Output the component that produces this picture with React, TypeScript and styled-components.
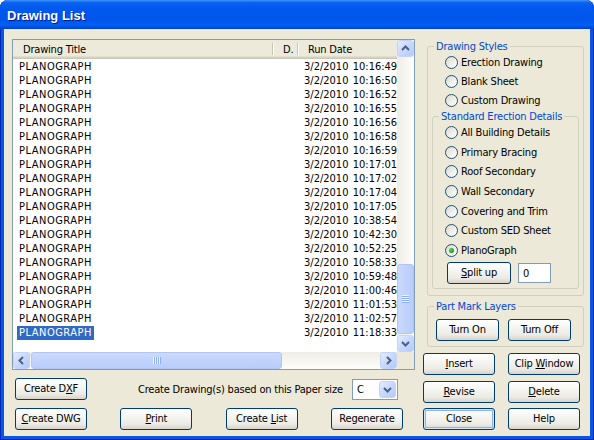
import React from 'react'
import styled, { createGlobalStyle } from 'styled-components'

const GlobalStyle = createGlobalStyle`
  html, body {
    margin: 0;
    padding: 0;
    background: #ffffff;
  }
  body {
    font-family: 'DejaVu Sans Condensed', 'DejaVu Sans', sans-serif;
    font-stretch: condensed;
    font-size: 11px;
    letter-spacing: -0.2px;
    color: #000;
  }
`

const Window = styled.div`
  width: 594px;
  height: 440px;
  display: flex;
  flex-direction: column;
  border-radius: 8px 8px 0 0;
  overflow: hidden;
  background: #0a56e2;
  box-shadow: inset 1px 0 #0028b8, inset -1px 0 #0028b8, inset 0 -1px #0020a8;
`

const TitleBar = styled.div`
  flex: none;
  height: 29px;
  display: flex;
  align-items: center;
  padding: 1px 7px 0;
  box-sizing: border-box;
  background: linear-gradient(
    to bottom,
    #3d95ff 0%,
    #0a62f0 9%,
    #0058ee 30%,
    #0056ea 70%,
    #0060f6 86%,
    #004ee0 94%,
    #0040c8 100%
  );
  color: #fff;
  font: bold 13px 'Liberation Sans', Arial, sans-serif;
  font-stretch: normal;
  letter-spacing: 0;
  text-shadow: 1px 1px #0a1883;
`

const Client = styled.div`
  flex: 1;
  display: flex;
  margin: 0 4px 4px;
  padding: 10px 0 0 8px;
  background: #ece9d8;
`

const LeftCol = styled.div`
  width: 403px;
  display: flex;
  flex-direction: column;
`

const RightCol = styled.div`
  width: 165px;
  margin-left: 8px;
  display: flex;
  flex-direction: column;
`

/* ---------- list view ---------- */

const ListView = styled.div`
  width: 403px;
  height: 331px;
  box-sizing: border-box;
  border: 1px solid #7f9db9;
  background: #fff;
  display: grid;
  grid-template-columns: 1fr 17px;
  grid-template-rows: 1fr 17px;
`

const ListPane = styled.div`
  overflow: hidden;
  display: flex;
  flex-direction: column;
`

const Header = styled.div`
  flex: none;
  height: 19px;
  display: flex;
  padding: 3px 0 4px;
  box-sizing: border-box;
  background: #ebeadb;
  box-shadow: inset 0 -1px #cbc7b8, inset 0 -2px #d6d2c2, inset 0 -3px #e2decd;
`

const HeaderCell = styled.div<{ $w?: number }>`
  ${p => (p.$w ? `width: ${p.$w}px; flex: none;` : 'flex: 1;')}
  box-sizing: border-box;
  padding-left: 10px;
  display: flex;
  align-items: center;
  white-space: nowrap;
  overflow: hidden;
  border-right: ${p => (p.$w ? '1px solid #c7c5b2' : 'none')};
  box-shadow: ${p => (p.$w ? '1px 0 #fff' : 'none')};
`

const Row = styled.div`
  height: 14px;
  display: flex;
  align-items: center;
  white-space: pre;
`

const TitleCell = styled.div`
  width: 260px;
  flex: none;
  padding-left: 4px;
  box-sizing: border-box;
`

const TitleText = styled.span<{ $selected?: boolean }>`
  padding: 0 2px 1px;
  letter-spacing: 0.5px;
  background: ${p => (p.$selected ? '#316ac5' : 'transparent')};
  color: ${p => (p.$selected ? '#fff' : '#000')};
`

const DCell = styled.div`
  width: 25px;
  flex: none;
`

const DateCell = styled.div`
  flex: none;
  padding-left: 6px;
  letter-spacing: 0;
  word-spacing: -1px;
`

/* ---------- scrollbars ---------- */

const VScroll = styled.div`
  display: flex;
  flex-direction: column;
  background: linear-gradient(to right, #eeede5, #fefefb);
`

const HScroll = styled.div`
  display: flex;
  background: linear-gradient(to bottom, #eeede5, #fefefb);
`

const SizeBox = styled.div`
  background: #ece9d8;
`

const ArrowButton = styled.div`
  width: 17px;
  height: 17px;
  flex: none;
  box-sizing: border-box;
  border: 1px solid #c3d3fd;
  border-radius: 3px;
  background: linear-gradient(135deg, #e4ecfe 0%, #c8d8fc 50%, #b3c9f8 100%);
  display: flex;
  align-items: center;
  justify-content: center;
`

const Track = styled.div<{ $vertical?: boolean }>`
  flex: 1;
  display: flex;
  flex-direction: ${p => (p.$vertical ? 'column' : 'row')};
`

const Thumb = styled.div<{ $vertical?: boolean; $offset: number; $size: number }>`
  box-sizing: border-box;
  border: 1px solid #b3c6f3;
  border-radius: 3px;
  display: flex;
  align-items: center;
  justify-content: center;
  ${p =>
    p.$vertical
      ? `margin-top: ${p.$offset}px; height: ${p.$size}px;
         background: linear-gradient(to right, #cad9fd, #b9cdfa);`
      : `margin-left: ${p.$offset}px; width: ${p.$size}px;
         background: linear-gradient(to bottom, #cad9fd, #b9cdfa);`}
`

const Grip = styled.span<{ $vertical?: boolean }>`
  ${p =>
    p.$vertical
      ? `width: 7px; height: 8px;
         background: repeating-linear-gradient(to bottom, #eef4fe 0 1px, #8cb0f8 1px 2px);`
      : `width: 8px; height: 7px;
         background: repeating-linear-gradient(to right, #eef4fe 0 1px, #8cb0f8 1px 2px);`}
`

const Chevron = ({ dir }: { dir: 'up' | 'down' | 'left' | 'right' }) => {
  const pts = {
    up: '1,6 4.5,2.5 8,6',
    down: '1,3 4.5,6.5 8,3',
    left: '6,1 2.5,4.5 6,8',
    right: '3,1 6.5,4.5 3,8',
  }[dir]
  return (
    <svg width="9" height="9" viewBox="0 0 9 9">
      <polyline points={pts} fill="none" stroke="#4d6185" strokeWidth="2" />
    </svg>
  )
}

/* ---------- controls ---------- */

const Button = styled.div<{ $w?: number; $default?: boolean }>`
  width: ${p => p.$w ?? 72}px;
  height: 22px;
  flex: none;
  box-sizing: border-box;
  border: 1px solid #003c74;
  border-radius: 3px;
  background: linear-gradient(to bottom, #ffffff 0%, #f6f6f2 35%, #ecebe5 75%, #d8d3c8 100%);
  text-align: center;
  line-height: 20px;
  white-space: pre;
  box-shadow: ${p =>
    p.$default ? 'inset 0 0 0 1px #cee7ff, inset 0 0 0 2px #8db2ec' : 'none'};
`

const U = styled.span`
  text-decoration: underline;
`

const BottomArea = styled.div`
  display: flex;
  flex-direction: column;
  gap: 8px;
  margin-top: 8px;
  padding-left: 3px;
  width: 388px;
`

const BottomRow = styled.div<{ $spread?: boolean }>`
  display: flex;
  align-items: center;
  justify-content: ${p => (p.$spread ? 'space-between' : 'flex-start')};
`

const PaperLabel = styled.span`
  margin-left: 51px;
  white-space: nowrap;
`

const Combo = styled.div`
  margin-left: auto;
  margin-right: 5px;
  width: 46px;
  height: 21px;
  box-sizing: border-box;
  border: 1px solid #7f9db9;
  background: #fff;
  display: flex;
  align-items: center;
  padding: 1px;
`

const ComboText = styled.span`
  flex: 1;
  padding-left: 3px;
`

const ComboButton = styled(ArrowButton)`
  height: 17px;
`

const GroupBox = styled.fieldset<{ $inset?: number }>`
  margin: 0 ${p => p.$inset ?? 0}px;
  padding: 0;
  border: 1px solid #d0d0bf;
  border-radius: 3px;
  min-width: 0;
`

const Legend = styled.legend`
  margin-left: 6px;
  padding: 0 2px;
  color: #0046d5;
  line-height: 13px;
`

const RadioList = styled.div<{ $pad: number; $rowH: number }>`
  display: flex;
  flex-direction: column;
  padding-left: ${p => p.$pad}px;
  & > label {
    height: ${p => p.$rowH}px;
  }
`

const RadioRow = styled.label`
  display: flex;
  align-items: center;
  gap: 3px;
  white-space: nowrap;
`

const RadioCircle = styled.span`
  width: 13px;
  height: 13px;
  box-sizing: border-box;
  border-radius: 50%;
  border: 1px solid #1c5180;
  background: linear-gradient(135deg, #dcd9cf 0%, #f0efea 55%, #ffffff 100%);
  display: flex;
  align-items: center;
  justify-content: center;
  flex: none;
`

const RadioDot = styled.span`
  width: 5px;
  height: 5px;
  border-radius: 50%;
  background: radial-gradient(circle at 35% 35%, #55d655, #21a121 60%, #1a8a1a);
`

const SplitRow = styled.div`
  display: flex;
  align-items: center;
  margin: 2px 0 4px 14px;
`

const NumberBox = styled.div`
  margin-left: 7px;
  width: 33px;
  height: 20px;
  box-sizing: border-box;
  border: 1px solid #7f9db9;
  background: #fff;
  display: flex;
  align-items: center;
  padding-left: 4px;
`

const LayerButtons = styled.div`
  display: flex;
  gap: 9px;
  padding: 6px 0 5px 8px;
`

const ActionGrid = styled.div`
  display: grid;
  grid-template-columns: 72px 72px;
  column-gap: 13px;
  row-gap: 5.5px;
  margin-top: 6px;
`

const times = [
  '10:16:49', '10:16:50', '10:16:52', '10:16:55', '10:16:56', '10:16:58', '10:16:59',
  '10:17:01', '10:17:02', '10:17:04', '10:17:05', '10:38:54', '10:42:30', '10:52:25',
  '10:58:33', '10:59:48', '11:00:46', '11:01:53', '11:02:57', '11:18:33',
]

const Radio = ({ label, checked }: { label: string; checked?: boolean }) => (
  <RadioRow>
    <RadioCircle>{checked && <RadioDot />}</RadioCircle>
    {label}
  </RadioRow>
)

export default function App() {
  return (
    <>
      <GlobalStyle />
      <Window>
        <TitleBar>Drawing List</TitleBar>
        <Client>
          <LeftCol>
            <ListView>
              <ListPane>
                <Header>
                  <HeaderCell $w={260}>Drawing Title</HeaderCell>
                  <HeaderCell $w={25}>D.</HeaderCell>
                  <HeaderCell>Run Date</HeaderCell>
                </Header>
                {times.map((t, i) => (
                  <Row key={t}>
                    <TitleCell>
                      <TitleText $selected={i === times.length - 1}>PLANOGRAPH</TitleText>
                    </TitleCell>
                    <DCell />
                    <DateCell>{`3/2/2010  ${t}`}</DateCell>
                  </Row>
                ))}
              </ListPane>
              <VScroll>
                <ArrowButton><Chevron dir="up" /></ArrowButton>
                <Track $vertical>
                  <Thumb $vertical $offset={207} $size={70}>
                    <Grip $vertical />
                  </Thumb>
                </Track>
                <ArrowButton><Chevron dir="down" /></ArrowButton>
              </VScroll>
              <HScroll>
                <ArrowButton><Chevron dir="left" /></ArrowButton>
                <Track>
                  <Thumb $offset={1} $size={251}>
                    <Grip />
                  </Thumb>
                </Track>
                <ArrowButton><Chevron dir="right" /></ArrowButton>
              </HScroll>
              <SizeBox />
            </ListView>

            <BottomArea>
              <BottomRow>
                <Button>Create D<U>X</U>F</Button>
                <PaperLabel>Create Drawing(s) based on this Paper size</PaperLabel>
                <Combo>
                  <ComboText>C</ComboText>
                  <ComboButton><Chevron dir="down" /></ComboButton>
                </Combo>
              </BottomRow>
              <BottomRow $spread>
                <Button><U>C</U>reate DWG</Button>
                <Button><U>P</U>rint</Button>
                <Button>Create <U>L</U>ist</Button>
                <Button>Regenerate</Button>
              </BottomRow>
            </BottomArea>
          </LeftCol>

          <RightCol>
            <GroupBox $inset={4} style={{ marginTop: 1 }}>
              <Legend>Drawing Styles</Legend>
              <RadioList $pad={17} $rowH={19}>
                <Radio label="Erection Drawing" />
                <Radio label="Blank Sheet" />
                <Radio label="Custom Drawing" />
              </RadioList>
              <GroupBox $inset={4} style={{ marginBottom: 6 }}>
                <Legend>Standard Erection Details</Legend>
                <RadioList $pad={12} $rowH={19.6}>
                  <Radio label="All Building Details" />
                  <Radio label="Primary Bracing" />
                  <Radio label="Roof Secondary" />
                  <Radio label="Wall Secondary" />
                  <Radio label="Covering and Trim" />
                  <Radio label="Custom SED Sheet" />
                  <Radio label="PlanoGraph" checked />
                </RadioList>
                <SplitRow>
                  <Button $w={64}><U>S</U>plit up</Button>
                  <NumberBox>0</NumberBox>
                </SplitRow>
              </GroupBox>
            </GroupBox>

            <GroupBox $inset={4} style={{ marginTop: 4 }}>
              <Legend>Part Mark Layers</Legend>
              <LayerButtons>
                <Button $w={63}>Turn On</Button>
                <Button $w={63}>Turn Off</Button>
              </LayerButtons>
            </GroupBox>

            <ActionGrid>
              <Button><U>I</U>nsert</Button>
              <Button>Clip <U>W</U>indow</Button>
              <Button><U>R</U>evise</Button>
              <Button><U>D</U>elete</Button>
              <Button $default>Close</Button>
              <Button>Help</Button>
            </ActionGrid>
          </RightCol>
        </Client>
      </Window>
    </>
  )
}
